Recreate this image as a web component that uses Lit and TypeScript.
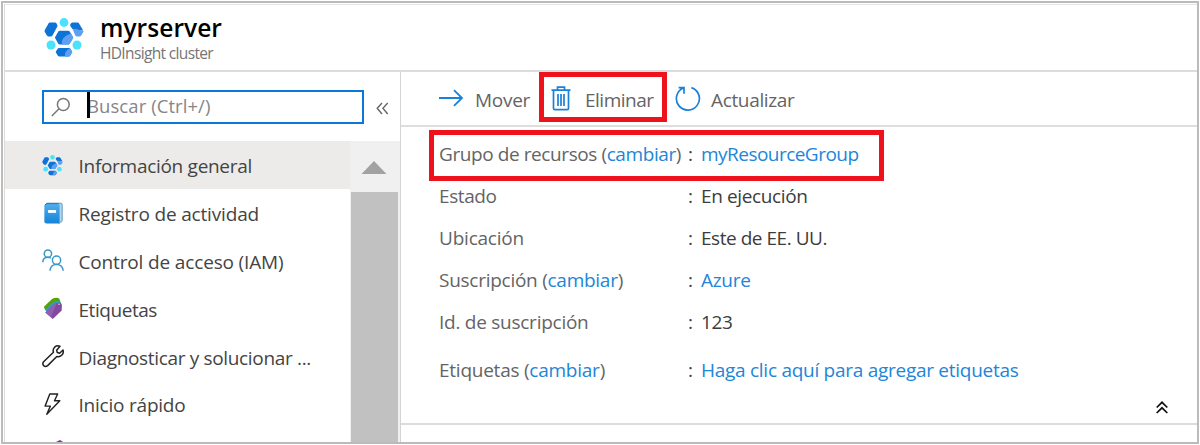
import { LitElement, html, svg, css } from "lit";
import { customElement, property } from "lit/decorators.js";

/** One line of text whose tracking is set so that it fills the given width. */
@customElement("fit-text")
class FitText extends LitElement {
  @property({ type: Number }) w = 0;
  static styles = css`
    :host { display: inline-block; white-space: pre; }
  `;
  render() {
    return html`<slot></slot>`;
  }
  updated() {
    this.style.letterSpacing = "0px";
    const natural = this.getBoundingClientRect().width;
    const count = (this.textContent ?? "").length;
    if (this.w && count) {
      this.style.letterSpacing = `${(this.w - natural) / count}px`;
    }
  }
}

const clusterIcon = svg`
  <svg class="cluster" viewBox="0 0 40 40">
    <path d="M5.900 4.500H11q1 0 1.400.8l1 1.900q.3.700-.1 1.400L8.500 17.600q-.5.800-1.400.800H4.300q-.9 0-1.400-.8L.7 13.800q-.4-.8 0-1.600L4.600 5.300q.4-.8 1.300-.8z" fill="#0b74d6"></path>
    <path d="M28.500 4.500h5.100q.9 0 1.300.8l4.300 7.200-10.600-1.300-2.300-3.300q-.4-.7 0-1.400l.8-1.200q.5-.8 1.400-.8z" fill="#0b74d6"></path>
    <path d="M28.400 10.500l11 2.200q.3.700-.1 1.300l-2.100 3.600q-.4.800-1.300.8h-3.200q-.9 0-1.400-.8z" fill="#5e9ff2"></path>
    <path d="M15.800 12.800h8.400q1 0 1.500.8l3.200 5.300q.4.700 0 1.400l-3.200 5.400q-.5.800-1.500.800h-8.400q-1 0-1.500-.800L11.200 20.300q-.4-.700 0-1.400l3.100-5.300q.5-.8 1.500-.8z" fill="#0b74d6"></path>
    <path d="M27 15.600l2 3.300q.4.700 0 1.400l-3.300 5.400q-.5.800-1.500.8h-6.500q-.5-8 9.300-10.900z" fill="#5e9ff2"></path>
    <path d="M15 30h10q1 0 1.400.7l1.600 2.700q.3.600 0 1.200l-1.900 3.200q-.4.700-1.300.7h-9.600q-.9 0-1.300-.7l-2-3.200q-.3-.6 0-1.200l1.700-2.700q.5-.7 1.400-.7z" fill="#0b74d6"></path>
    <path d="M21 38.500q-1-5 4.700-8.300.6.200.9.700l1.500 2.500q.3.600 0 1.200l-1.900 3.200q-.4.700-1.300.7z" fill="#5e9ff2"></path>
    <circle cx="20" cy="4.500" r="4.400" fill="#4be2fb"></circle>
    <circle cx="7" cy="27" r="4.500" fill="#4be2fb"></circle>
    <circle cx="33" cy="27" r="4.500" fill="#4be2fb"></circle>
  </svg>`;

const logIcon = svg`
  <svg class="ico" viewBox="0 0 24 24">
    <defs><linearGradient id="b" x1="0" y1="0" x2="0" y2="1"><stop offset="0" stop-color="#4fb0ee"></stop><stop offset="1" stop-color="#1583d8"></stop></linearGradient></defs>
    <path d="M5 1.300h15q1.500 0 1.500 1.500v17q0 1.500-1.500 1.500L18 23z" fill="#b5d6ee" stroke="#5b8fb5" stroke-width="1"></path>
    <path d="M5 1.800h12.100q1.700 0 1.700 1.600v18q0 1.600-1.700 1.600H5q-2.500 0-2.500-2.300V4q0-2.200 2.500-2.200z" fill="url(#b)"></path>
    <path d="M3.500 3.400q.5-1.700 2-1.700h12" fill="none" stroke="#2a75ad" stroke-width="1"></path>
    <rect x="6.500" y="8.600" width="8.500" height="3" fill="#fff"></rect>
  </svg>`;

const peopleIcon = svg`
  <svg class="ico" viewBox="0 0 24 24" fill="none" stroke="#3a98c9" stroke-width="1.600">
    <circle cx="6.300" cy="5" r="3.900"></circle>
    <path d="M.8 14.200q.2-5.300 5.500-5.300 1.700 0 3.200.8"></path>
    <circle cx="15.500" cy="12" r="4.400"></circle>
    <path d="M8.500 23.200q.7-6.700 7-6.800 6.300.1 7.100 6.800"></path>
  </svg>`;

const tagIcon = svg`
  <svg class="ico" viewBox="0 0 24 24">
    <path d="M2 10.500L11 1.800q5-2 7.500 0l1.500 4.700L7 15.500l-4-2.500z" fill="#57a300"></path>
    <path d="M3 13.500L13 4.500l6-.7 1.500 4.200L8 18.500z" fill="#3999c6"></path>
    <path d="M3.500 16.500L13.500 7.300l5.500-1.300q2 .5 2.200 2.500l-.2 6-9.500 9z" fill="#814a9e"></path>
    <path d="M3.500 16.500L13.500 7.300l2-.5L9.500 21.500z" fill="#925fb0"></path>
    <circle cx="18.200" cy="7.600" r=".8" fill="#e8dcee"></circle>
  </svg>`;

const wrenchIcon = svg`
  <svg class="ico" viewBox="0 0 24 24" fill="none" stroke="#222" stroke-width="1.600" stroke-linejoin="round">
    <path d="M19.200 1.400q-3.200-1.300-5.700.9-2.300 2.300-1.300 5.400L1.700 17.900q-1.700 2.200.1 4.100 2 1.800 4.200 0l9.800-9.800q3 .9 5.200-1.200 2.500-2.300 1.400-5.600l-3.600 3.400-2.500-.7-.7-2.600z"></path>
  </svg>`;

const boltIcon = svg`
  <svg class="ico" viewBox="0 0 24 24" fill="none" stroke="#222" stroke-width="1.500" stroke-linejoin="round">
    <path d="M8.300 1h8.400L13.300 8.300h5.700L5.100 22.700 8.900 14H3.300z"></path>
  </svg>`;

const nav = [
  { icon: clusterIcon, text: "Información general", w: 173.5, on: true },
  { icon: logIcon, text: "Registro de actividad", w: 180.5 },
  { icon: peopleIcon, text: "Control de acceso (IAM)", w: 205 },
  { icon: tagIcon, text: "Etiquetas", w: 78.5 },
  { icon: wrenchIcon, text: "Diagnosticar y solucionar ...", w: 232.5 },
  { icon: boltIcon, text: "Inicio rápido", w: 107 },
];

const props = [
  { label: "Grupo de recursos", change: true, w: 242, value: "myResourceGroup", vw: 157.5, link: true },
  { label: "Estado", w: 57.5, value: "En ejecución", vw: 106.5 },
  { label: "Ubicación", w: 85, value: "Este de EE. UU.", vw: 126 },
  { label: "Suscripción", change: true, w: 184, value: "Azure", vw: 49.5, link: true },
  { label: "Id. de suscripción", w: 149.5, value: "123", vw: 31.5 },
  { label: "Etiquetas", change: true, w: 166, value: "Haga clic aquí para agregar etiquetas", vw: 317.5, link: true },
];

@customElement("app-root")
class AppRoot extends LitElement {
  static styles = css`
    :host {
      display: block; box-sizing: border-box; width: 1200px; height: 445px;
      padding: 1px; background: #fff; overflow: hidden;
      font-family: "Open Sans", "Noto Sans", sans-serif; font-size: 19px; color: #444;
    }
    svg { display: block; flex: none; }
    .frame {
      box-sizing: border-box; height: 443px; border: 2px solid #bbb;
      display: flex; flex-direction: column; overflow: hidden; position: relative;
    }
    .inner {
      flex: 1; min-height: 0; display: flex; flex-direction: column;
      margin: 1px 0 0 1px; border-left: 1px solid #dcdcdc; border-top: 1px solid #e6e6e6;
    }
    .head {
      box-sizing: border-box; height: 67px; flex: none; display: flex; gap: 16px;
      padding: 13px 0 0 39px; border-bottom: 2px solid #dcdcdc;
    }
    .head .cluster { width: 40px; height: 40px; }
    .titles { display: flex; flex-direction: column; align-items: flex-start; }
    .name { font-size: 24.500px; line-height: 30px; height: 25px; margin-top: -5px; font-weight: 600; color: #000; }
    .kind { font-size: 15.500px; line-height: 20px; margin-top: 5px; color: #757575; }
    .body { flex: 1; min-height: 0; display: flex; }
    .side {
      box-sizing: border-box; width: 396px; flex: none; display: flex; flex-direction: column;
      border-right: 1px solid #d4d4d4;
    }
    .search { display: flex; align-items: center; padding: 18px 0 17px 37px; gap: 12px; }
    .box {
      box-sizing: border-box; width: 322px; height: 34px; border: 2px solid #0a78d7;
      display: flex; align-items: center; padding-left: 7px;
    }
    .caret { width: 3px; height: 26px; margin: -4px -3px 0 16px; background: #000; z-index: 1; }
    .hint { font-size: 18.500px; line-height: 28px; margin-top: -2px; color: #85858a; }
    .search .fold { margin-top: 3px; }
    .lower { flex: 1; min-height: 0; display: flex; overflow: hidden; }
    .nav { flex: 1; overflow: hidden; display: flex; flex-direction: column; }
    .item { flex: none; height: 47.900px; display: flex; align-items: center; gap: 14px; padding-left: 37px; }
    .item.on { background: #ecebe9; }
    .item .ico { width: 22.500px; height: 22.500px; }
    .item .cluster { width: 21px; height: 21px; padding: 1px 1.500px 0 0; }
    .item fit-text { line-height: 30px; margin-top: 2px; }
    .more { flex: none; margin: 10.500px 0 0 51px; }
    .scroll { width: 50px; flex: none; background: #f0f0f0; display: flex; flex-direction: column; }
    .scroll .up { margin: 20px 0 18px 11px; }
    .thumb { flex: 1; margin: 0 2px 0 1px; background: #c1c1c1; }
    .main { flex: 1; min-width: 0; display: flex; flex-direction: column; }
    .tools {
      box-sizing: border-box; height: 55px; flex: none; display: flex; align-items: center;
      padding-left: 38px; border-bottom: 2px solid #dedede; color: #646464;
    }
    .tools fit-text { line-height: 30px; margin-top: 3px; }
    .tool { display: flex; align-items: center; }
    .move { width: 112px; gap: 11px; }
    .move svg { margin-bottom: 1px; }
    .delete { width: 124px; gap: 14px; }
    .refresh { gap: 10px; }
    .props {
      display: grid; grid-template-columns: 249px 13px auto; justify-content: start;
      grid-template-rows: 42px 42px 42px 42px 41px 56px; align-items: center; justify-items: start;
      padding: 6px 0 0 38px; color: #646464; line-height: 30px;
    }
    .row { display: contents; }
    .v, .c { color: #3c3c3c; }
    a, .v.link { color: #2186d8; text-decoration: none; }
    .collapse { display: flex; justify-content: flex-end; padding: 3px 29px 0 0; }
    .rule { height: 2px; background: #dcdcdc; margin-top: 9px; flex: none; }
    .mark { position: absolute; box-sizing: border-box; border: 5px solid #ee121d; }
    .mark.a { left: 536px; top: 69px; width: 128px; height: 50px; }
    .mark.b { left: 426px; top: 127px; width: 455px; height: 51px; }
  `;

  render() {
    return html`
      <div class="frame">
        <div class="inner">
          <header class="head">
            ${clusterIcon}
            <div class="titles">
              <fit-text class="name" w="122">myrserver</fit-text>
              <fit-text class="kind" w="113">HDInsight cluster</fit-text>
            </div>
          </header>
          <div class="body">
            <aside class="side">
              <div class="search">
                <div class="box">
                  <svg width="20" height="20" viewBox="0 0 20 20" fill="none" stroke="#777" stroke-width="1.500">
                    <circle cx="12.300" cy="7.500" r="5.900"></circle><path d="M8 11.800L.8 19"></path>
                  </svg>
                  <span class="caret"></span>
                  <fit-text class="hint" w="123.5">Buscar (Ctrl+/)</fit-text>
                </div>
                <svg class="fold" width="13" height="13" viewBox="0 0 13 13" fill="none" stroke="#666" stroke-width="1.400">
                  <path d="M6 1L1.200 6.300 6 12M11.700 1L6.900 6.300 11.700 12"></path>
                </svg>
              </div>
              <div class="lower">
                <nav class="nav">
                  ${nav.map(
                    (n) => html`<div class="item ${n.on ? "on" : ""}">${n.icon}<fit-text .w=${n.w}>${n.text}</fit-text></div>`
                  )}
                  <svg class="more" width="8" height="8" viewBox="0 0 8 8"><path d="M0 3L4 1l3 2v5H0z" fill="#7a2fa0"></path></svg>
                </nav>
                <div class="scroll">
                  <svg class="up" width="26" height="13" viewBox="0 0 26 13"><path d="M13 0L25.500 13H.5z" fill="#a2a2a2"></path></svg>
                  <div class="thumb"></div>
                </div>
              </div>
            </aside>
            <main class="main">
              <div class="tools">
                <div class="tool move">
                  <svg width="25" height="18" viewBox="0 0 25 18" fill="none" stroke="#1a80d9" stroke-width="1.800">
                    <path d="M0 9H23M15 1.200L23 9l-8 7.800"></path>
                  </svg>
                  <fit-text w="55">Mover</fit-text>
                </div>
                <div class="tool delete">
                  <svg width="20" height="25" viewBox="0 0 20 25" fill="none" stroke="#1a80d9" stroke-width="1.700">
                    <path d="M.5 4.200h19M6.500 4V1.200h7V4M2.500 4.500v17.800q0 1.400 1.400 1.400h12.200q1.400 0 1.400-1.400V4.500M7 8v12M10 8v12M13 8v12"></path>
                  </svg>
                  <fit-text w="68.5">Eliminar</fit-text>
                </div>
                <div class="tool refresh">
                  <svg width="26" height="26" viewBox="0 0 26 26" fill="none" stroke="#1a80d9" stroke-width="1.700">
                    <path d="M16.400 1.600A11.500 11.500 0 1 1 8.800 1.800M3.600 1.700H9v6"></path>
                  </svg>
                  <fit-text w="83.5">Actualizar</fit-text>
                </div>
              </div>
              <div class="props">
                ${props.map(
                  (p) => html`<div class="row">
                    <fit-text .w=${p.w}>${p.label}${p.change ? html` (<a>cambiar</a>)` : ""}</fit-text>
                    <span class="c">:</span>
                    <fit-text class="v ${p.link ? "link" : ""}" .w=${p.vw}>${p.value}</fit-text>
                  </div>`
                )}
              </div>
              <div class="collapse">
                <svg width="12" height="13" viewBox="0 0 12 13" fill="none" stroke="#111" stroke-width="1.700">
                  <path d="M.7 6.500L6 1.300l5.300 5.200M.7 12L6 6.800 11.300 12"></path>
                </svg>
              </div>
              <div class="rule"></div>
            </main>
          </div>
        </div>
        <div class="mark a"></div>
        <div class="mark b"></div>
      </div>
    `;
  }
}
